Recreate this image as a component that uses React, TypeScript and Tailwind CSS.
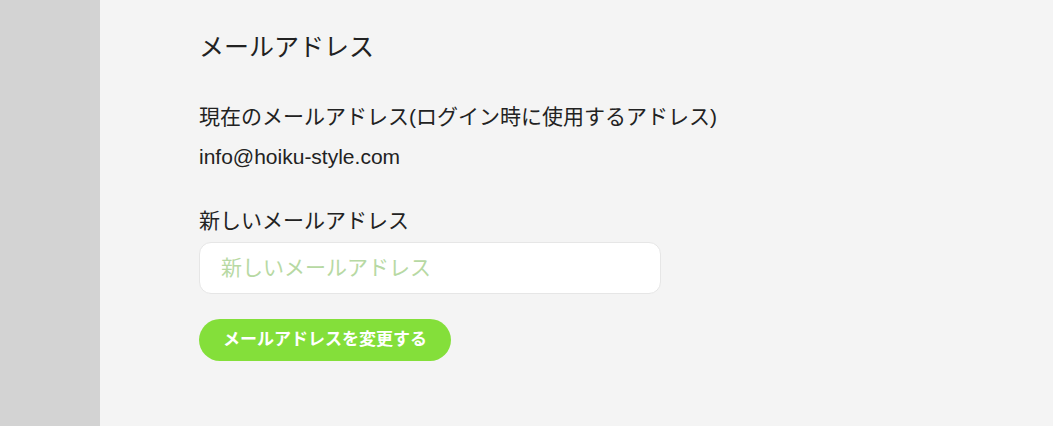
export default function App() {
  return (
    <div
      className="flex h-[426px] w-full bg-[#f4f4f4] text-[#222]"
      style={{ fontFamily: '"Liberation Sans", "Noto Sans CJK JP", sans-serif' }}
    >
      <div className="w-[100px] shrink-0 bg-[#d3d3d3]" />
      <div className="flex flex-col pl-[99px] pt-[28px]">
        <h1 className="text-[25px] leading-[38px]">メールアドレス</h1>
        <p className="mt-[36px] text-[21px] leading-[30px]">
          現在のメールアドレス(ログイン時に使用するアドレス)
        </p>
        <p className="mt-[10px] text-[21px] leading-[30px]">info@hoiku-style.com</p>
        <p className="mt-[34px] text-[21px] leading-[30px]">新しいメールアドレス</p>
        <input
          className="mt-[6px] h-[52px] w-[462px] rounded-[12px] border border-[#e6e6e6] bg-white px-[21px] text-[21px] outline-none placeholder:text-[#b7d9a3]"
          placeholder="新しいメールアドレス"
        />
        <button className="mt-[25px] h-[42px] w-[252px] rounded-full bg-[#84df3a] text-[17px] font-bold text-white">
          メールアドレスを変更する
        </button>
      </div>
    </div>
  );
}
